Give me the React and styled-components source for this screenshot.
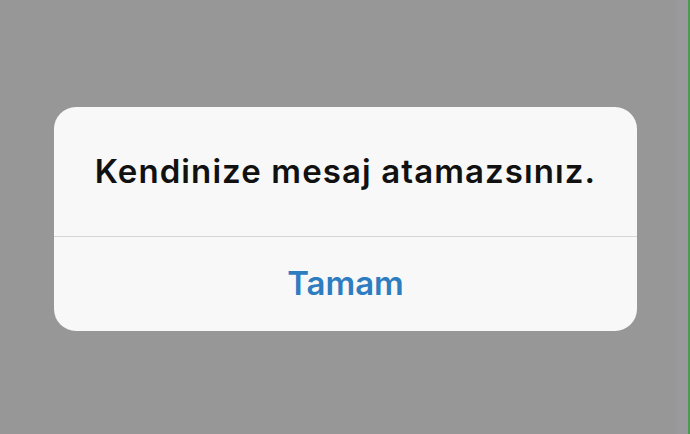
import React from "react";
import styled, { createGlobalStyle } from "styled-components";

const Global = createGlobalStyle`
  html, body { margin: 0; padding: 0; }
  body { background: #979797; font-family: Inter, "Liberation Sans", Arial, sans-serif; }
`;

const Page = styled.div`
  width: 690px;
  height: 434px;
  display: flex;
  background: #979797;
  overflow: hidden;
`;

const Stage = styled.div`
  flex: 1;
  padding: 107px 0 0 54px;
  box-sizing: border-box;
`;

const EdgeStrip = styled.div`
  width: ${(p) => p.$w}px;
  background: ${(p) => p.$c};
`;

const Dialog = styled.div`
  width: 583px;
  height: 224px;
  background: #f8f8f8;
  border-radius: 22px;
  display: flex;
  flex-direction: column;
  overflow: hidden;
`;

const Message = styled.div`
  height: 130px;
  display: flex;
  align-items: center;
  justify-content: center;
  border-bottom: 1px solid #d6d6d6;
  box-sizing: border-box;
  font-family: Inter, "Liberation Sans", Arial, sans-serif;
  font-size: 33px;
  font-weight: 600;
  letter-spacing: 1.1px;
  color: #111;
  padding-bottom: 2px;
`;

const Action = styled.div`
  flex: 1;
  display: flex;
  align-items: center;
  justify-content: center;
  font-family: Inter, "Liberation Sans", Arial, sans-serif;
  font-size: 33px;
  font-weight: 600;
  color: #2f7dc1;
  padding-bottom: 2px;
`;

export default function App() {
  return (
    <>
      <Global />
      <Page>
        <Stage>
          <Dialog>
            <Message>Kendinize mesaj atamazsınız.</Message>
            <Action>Tamam</Action>
          </Dialog>
        </Stage>
        <EdgeStrip $w={11} $c="#9a9a9e" />
        <EdgeStrip $w={2} $c="#4c9a52" />
      </Page>
    </>
  );
}
